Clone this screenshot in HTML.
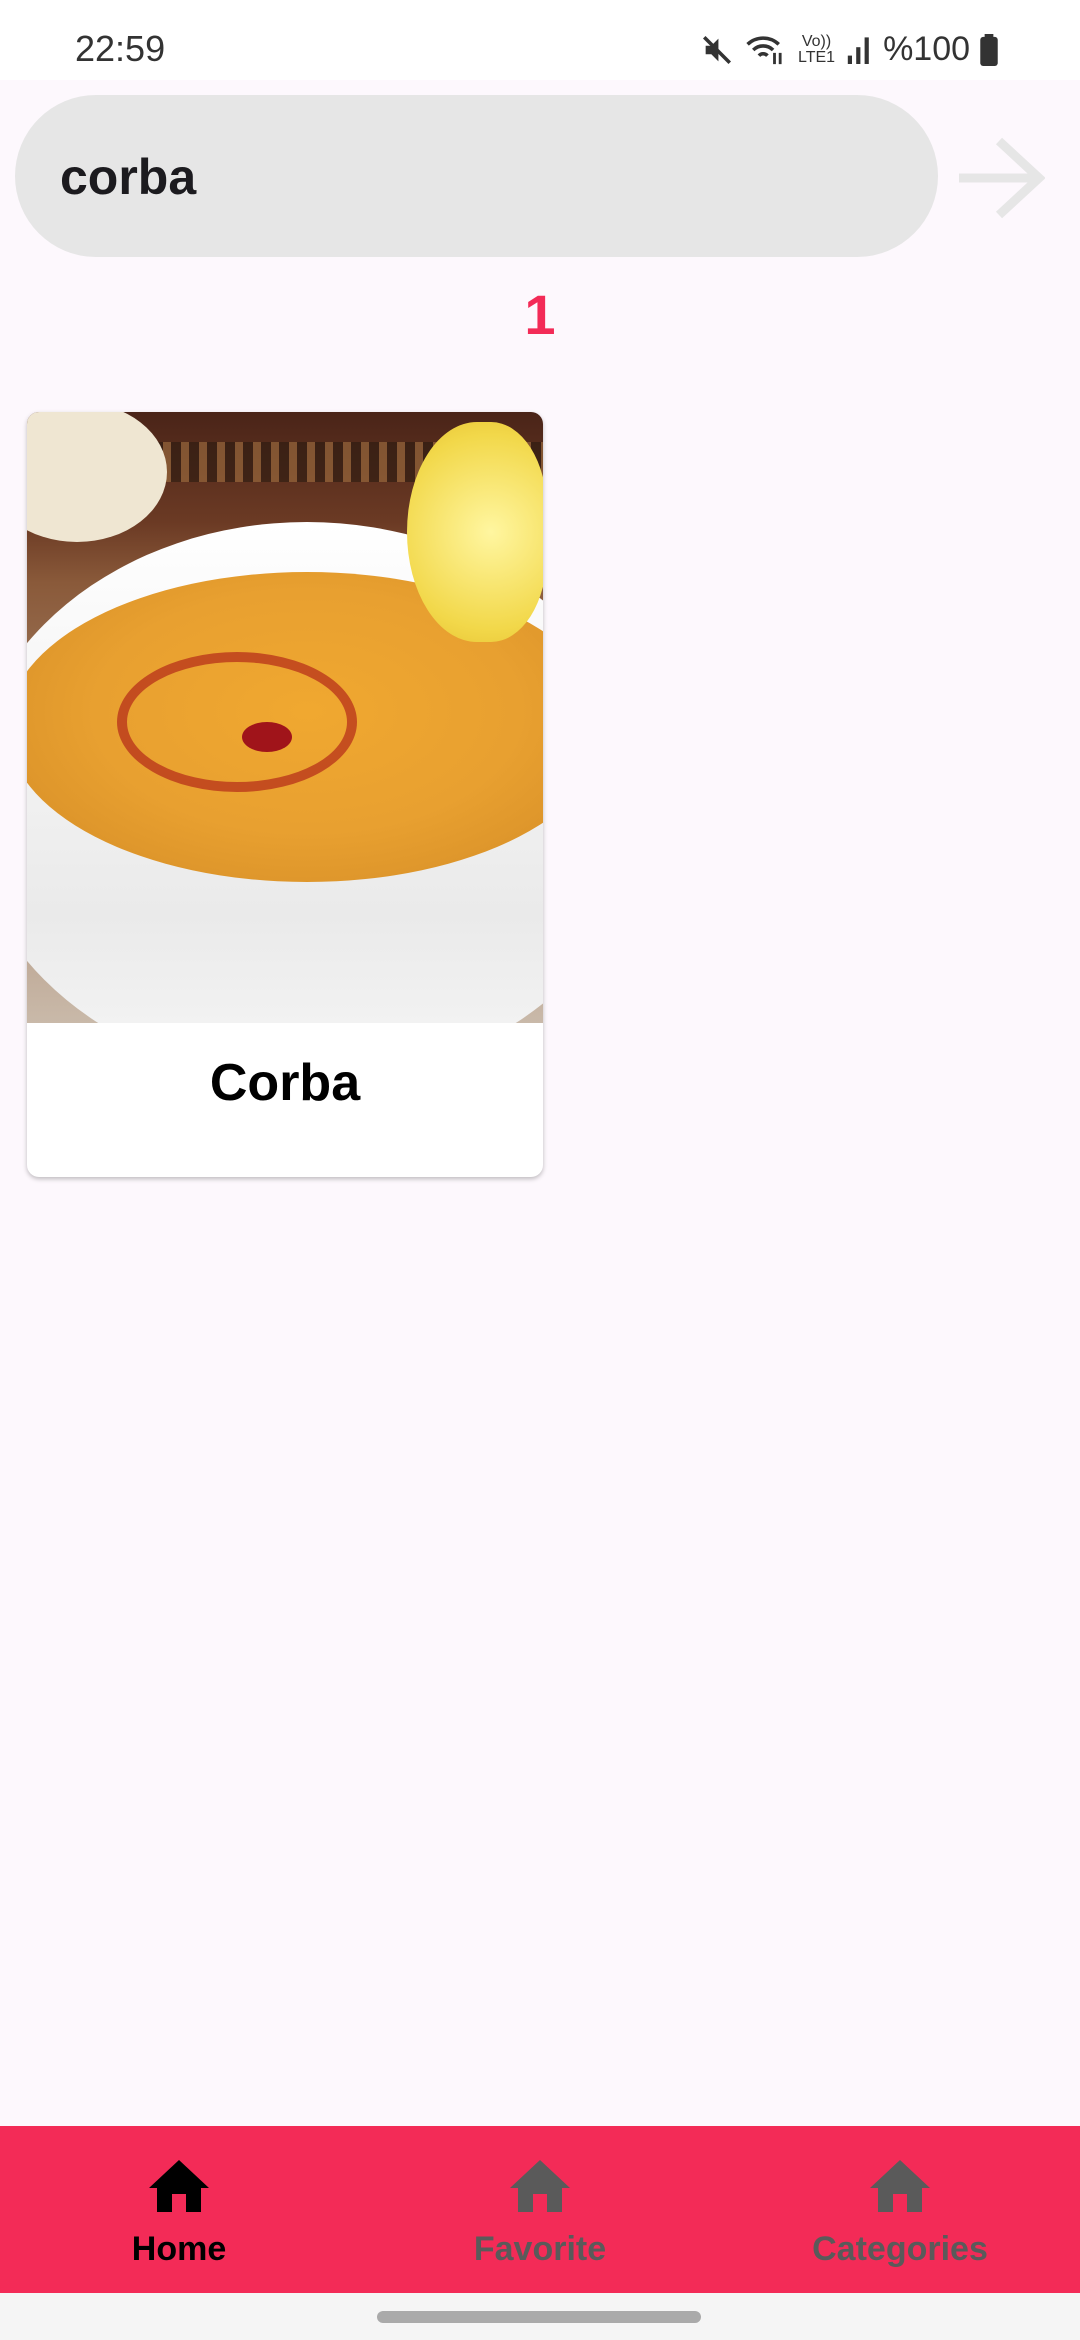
<!DOCTYPE html>
<html><head><meta charset="utf-8"><style>
*{margin:0;padding:0;box-sizing:border-box}
body{width:1080px;height:2340px;background:#fdf8fd;font-family:"Liberation Sans",sans-serif;position:relative;overflow:hidden}
.abs{position:absolute}
</style></head><body>
<div class="abs" style="left:0;top:0;width:1080px;height:80px;background:#fff"></div>
<div class="abs" style="left:75px;top:28px;font-size:36px;color:#333">22:59</div>
<div class="abs" style="left:700px;top:30px;font-size:34px;color:#333;display:flex;gap:10px;align-items:center">
<svg width="34" height="34" viewBox="0 0 24 24"><path d="M4 9h4l5-5v16l-5-5H4z" fill="#333"/><path d="M3 3l18 18" stroke="#333" stroke-width="2.5"/></svg>
<svg width="44" height="34" viewBox="0 0 30 24"><path d="M2 8a16 16 0 0 1 22 0M6 12a10 10 0 0 1 14 0M10 16a4 4 0 0 1 6 0" stroke="#333" stroke-width="2.5" fill="none"/><path d="M21 14v8M25 22v-8" stroke="#333" stroke-width="2"/></svg>
<span style="font-size:16px;line-height:16px;text-align:center">Vo))<br>LTE1</span>
<svg width="28" height="34" viewBox="0 0 20 24"><rect x="2" y="16" width="3" height="6" fill="#333"/><rect x="8" y="10" width="3" height="12" fill="#333"/><rect x="14" y="3" width="3" height="19" fill="#333"/></svg>
<span>%100</span>
<svg width="18" height="32" viewBox="0 0 12 22"><rect x="3" y="0" width="6" height="3" fill="#333"/><rect x="0" y="2" width="12" height="20" rx="2" fill="#333"/></svg>
</div>
<div class="abs" style="left:15px;top:95px;width:923px;height:162px;border-radius:81px;background:#e6e6e6"></div>
<div class="abs" style="left:60px;top:148px;font-size:50px;font-weight:bold;color:#1c1b1f">corba</div>
<svg class="abs" style="left:959px;top:137px" width="86" height="82" viewBox="0 0 86 82"><path d="M0 41h80M40 4l40 37-40 37" stroke="#e6e6e6" stroke-width="9" fill="none"/></svg>
<div class="abs" style="left:0;width:1080px;top:282px;text-align:center;font-size:56px;font-weight:bold;color:#f32b57">1</div>
<div class="abs" style="left:27px;top:412px;width:516px;height:765px;border-radius:12px;background:#fff;box-shadow:0 2px 5px rgba(0,0,0,.25);overflow:hidden">
 <div style="position:relative;height:611px;background:linear-gradient(180deg,#4a2418 0%,#6b3a24 18%,#8a5a3a 28%,#c9b9a9 100%);overflow:hidden">
  <div class="abs" style="left:0;top:30px;width:516px;height:40px;background:repeating-linear-gradient(90deg,#2a1a10 0 10px,#a07040 10px 18px);opacity:.6"></div>
  <div class="abs" style="left:-40px;top:-10px;width:180px;height:140px;border-radius:50%;background:#efe6d2"></div>
  <div class="abs" style="left:-60px;top:110px;width:680px;height:560px;border-radius:50%;background:linear-gradient(180deg,#fff,#eaeaea 70%,#f6f6f6)"></div>
  <div class="abs" style="left:-20px;top:160px;width:600px;height:310px;border-radius:50%;background:radial-gradient(ellipse at 50% 45%,#f0a830 0%,#e8a030 50%,#d89028 85%)"></div>
  <div class="abs" style="left:90px;top:240px;width:240px;height:140px;border-radius:50%;border:10px solid rgba(170,20,20,.6)"></div>
  <div class="abs" style="left:215px;top:310px;width:50px;height:30px;border-radius:50%;background:#a0141a"></div>
  <div class="abs" style="left:380px;top:10px;width:140px;height:220px;border-radius:50% 40% 40% 50%;background:radial-gradient(circle at 60% 50%,#fff6a0,#f2d84a 70%,#e6c030)"></div>
 </div>
 <div style="text-align:center;font-size:52px;font-weight:bold;color:#000;padding-top:30px">Corba</div>
</div>
<div class="abs" style="left:0;top:2126px;width:1080px;height:167px;background:#f32b57"></div>
<svg class="abs" style="left:149px;top:2160px" width="60" height="52" viewBox="0 0 60 52"><path d="M30 0L0 28h8v24h15V34h14v18h15V28h8z" fill="#000"/></svg>
<svg class="abs" style="left:510px;top:2160px" width="60" height="52" viewBox="0 0 60 52"><path d="M30 0L0 28h8v24h15V34h14v18h15V28h8z" fill="#5a5a5a"/></svg>
<svg class="abs" style="left:870px;top:2160px" width="60" height="52" viewBox="0 0 60 52"><path d="M30 0L0 28h8v24h15V34h14v18h15V28h8z" fill="#5a5a5a"/></svg>
<div class="abs" style="left:29px;top:2230px;width:300px;text-align:center;font-size:34px;font-weight:bold;color:#000">Home</div>
<div class="abs" style="left:390px;top:2230px;width:300px;text-align:center;font-size:34px;font-weight:bold;color:#5a5a5a">Favorite</div>
<div class="abs" style="left:750px;top:2230px;width:300px;text-align:center;font-size:34px;font-weight:bold;color:#5a5a5a">Categories</div>
<div class="abs" style="left:0;top:2293px;width:1080px;height:47px;background:#f5f5f5"></div>
<div class="abs" style="left:377px;top:2311px;width:324px;height:12px;border-radius:6px;background:#aaa"></div>
</body></html>
